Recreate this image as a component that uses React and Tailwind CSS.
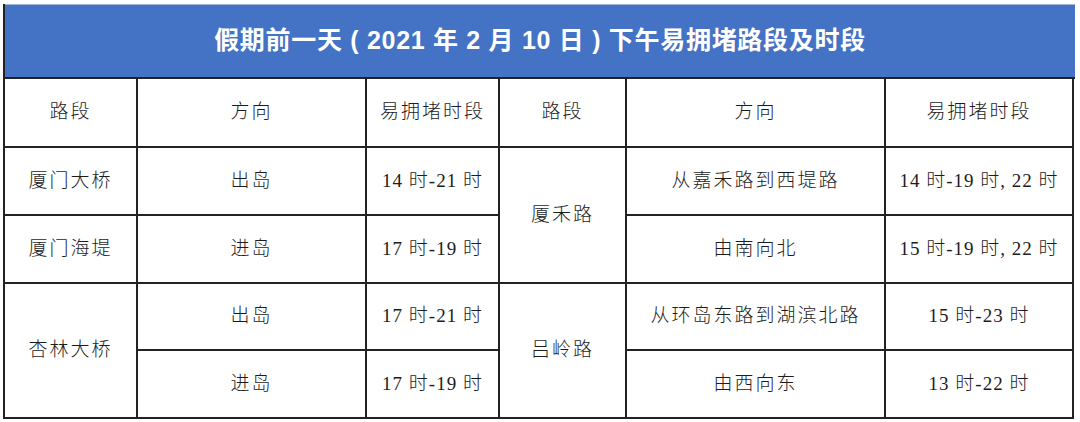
import React from "react";

const heads = ["路段", "方向", "易拥堵时段", "路段", "方向", "易拥堵时段"];

const Cell = ({ children, span, time }) => (
  <div
    className={
      "flex items-center justify-center border-r-2 border-b-2 border-[#222] text-[19px] text-[#1c1c1c] " +
      (time ? "tracking-[1px] " : "tracking-[2px] ") +
      (span ? "row-span-2" : "")
    }
  >
    {children}
  </div>
);

export default function App() {
  return (
    <div className="bg-white w-[1080px] h-[422px] pt-[4px] pl-[3px]">
      <div className="w-[1072px] border-l-2 border-[#222]">
        <div
          className="h-[73px] bg-[#4472c4] border-t border-[#9db3dd] flex items-center justify-center text-white font-bold text-[25px] tracking-[0.7px]"
          style={{ fontFamily: '"Liberation Sans", "Noto Sans CJK SC", sans-serif' }}
        >
          假期前一天 ( 2021 年 2 月 10 日 ) 下午易拥堵路段及时段
        </div>
        <div
          className="grid grid-cols-[133px_229px_133px_127px_259px_188px] grid-rows-[69px_68px_68px_67px_68px] border-t-2 border-[#222] font-light"
          style={{ fontFamily: '"Liberation Serif", "Noto Sans CJK SC", serif' }}
        >
          {heads.map((h, i) => (
            <Cell key={i}>{h}</Cell>
          ))}

          <Cell>厦门大桥</Cell>
          <Cell>出岛</Cell>
          <Cell time>14 时-21 时</Cell>
          <Cell span>厦禾路</Cell>
          <Cell>从嘉禾路到西堤路</Cell>
          <Cell time>14 时-19 时, 22 时</Cell>

          <Cell>厦门海堤</Cell>
          <Cell>进岛</Cell>
          <Cell time>17 时-19 时</Cell>
          <Cell>由南向北</Cell>
          <Cell time>15 时-19 时, 22 时</Cell>

          <Cell span>杏林大桥</Cell>
          <Cell>出岛</Cell>
          <Cell time>17 时-21 时</Cell>
          <Cell span>吕岭路</Cell>
          <Cell>从环岛东路到湖滨北路</Cell>
          <Cell time>15 时-23 时</Cell>

          <Cell>进岛</Cell>
          <Cell time>17 时-19 时</Cell>
          <Cell>由西向东</Cell>
          <Cell time>13 时-22 时</Cell>
        </div>
      </div>
    </div>
  );
}
